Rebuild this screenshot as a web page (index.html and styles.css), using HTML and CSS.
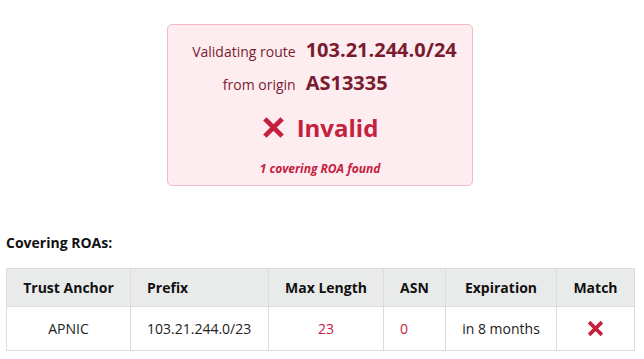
FILE: index.html
```html
<html>
<head>
    <title>ROA Validation</title>
    <link rel="stylesheet" href="styles.css">
</head>
<body>
    <!-- Validation result -->
    <div class="result-wrap">
        <div class="result-box">
            <div class="route-info">
                <span class="label">Validating route</span>
                <span class="value">103.21.244.0/24</span>
                <span class="label">from origin</span>
                <span class="value">AS13335</span>
            </div>
            <div class="status">
                <svg class="status-icon" viewBox="0 0 24 24" width="24" height="24">
                    <path d="M3 3 L21 21 M21 3 L3 21" stroke="currentColor" stroke-width="5" fill="none"/>
                </svg>
                <span>Invalid</span>
            </div>
            <div class="roa-count">1 covering ROA found</div>
        </div>
    </div>

    <!-- Covering ROAs -->
    <h4 class="section-title">Covering ROAs:</h4>
    <table class="roa-table">
        <thead>
            <tr>
                <th class="col-anchor">Trust Anchor</th>
                <th class="col-prefix left">Prefix</th>
                <th class="col-maxlen">Max Length</th>
                <th class="col-asn">ASN</th>
                <th class="col-exp">Expiration</th>
                <th class="col-match">Match</th>
            </tr>
        </thead>
        <tbody>
            <tr>
                <td>APNIC</td>
                <td class="left">103.21.244.0/23</td>
                <td class="bad">23</td>
                <td class="bad left">0</td>
                <td>in 8 months</td>
                <td>
                    <svg class="match-icon" viewBox="0 0 24 24" width="17" height="17">
                        <path d="M3 3 L21 21 M21 3 L3 21" stroke="currentColor" stroke-width="5" fill="none"/>
                    </svg>
                </td>
            </tr>
        </tbody>
    </table>
</body>
</html>
```

FILE: styles.css
```css
body {
    margin: 0;
    padding: 24px 6px 0 6px;
    font-family: 'Open Sans', 'Noto Sans', sans-serif;
    color: #222;
    background: #fff;
}

.result-wrap {
    display: flex;
    justify-content: center;
    padding-right: 4px;
}

.result-box {
    width: 306px;
    box-sizing: border-box;
    padding: 11px 0 8px 0;
    background-color: #fdedf0;
    border: 1px solid #f3b8c2;
    border-radius: 5px;
    display: flex;
    flex-direction: column;
    align-items: center;
    color: #7b1b30;
}

.route-info {
    display: grid;
    grid-template-columns: auto auto;
    column-gap: 10px;
    row-gap: 6px;
    align-items: baseline;
    margin-left: 9px;
}

.route-info .label {
    text-align: right;
    font-size: 14px;
}

.route-info .value {
    font-size: 20px;
    font-weight: bold;
}

.status {
    display: flex;
    align-items: center;
    gap: 12px;
    margin-top: 15px;
    color: #c4213f;
    font-size: 24px;
    font-weight: bold;
}

.status-icon {
    width: 23px;
    height: 23px;
}

.roa-count {
    margin-top: 16px;
    font-size: 12px;
    font-weight: bold;
    font-style: italic;
    color: #c4213f;
}

.section-title {
    margin: 47px 0 16px 0;
    font-size: 14px;
    font-weight: bold;
    color: #111;
}

.roa-table {
    width: 628px;
    table-layout: fixed;
    border-collapse: collapse;
    font-size: 14px;
}

.roa-table th,
.roa-table td {
    box-sizing: border-box;
    border: 1px solid #dcdcdc;
    text-align: center;
    padding: 0 8px;
    white-space: nowrap;
}

.roa-table th {
    height: 38px;
    background-color: #e9ebeb;
    color: #111;
}

.roa-table td {
    height: 44px;
    color: #222;
}

.roa-table .left {
    text-align: left;
    padding-left: 16px;
}

.roa-table .bad {
    color: #c4213f;
}

.col-anchor { width: 124px; }
.col-prefix { width: 138px; }
.col-maxlen { width: 115px; }
.col-asn { width: 62px; }
.col-exp { width: 111px; }
.col-match { width: 78px; }

.match-icon {
    color: #c4213f;
    vertical-align: middle;
}
```
